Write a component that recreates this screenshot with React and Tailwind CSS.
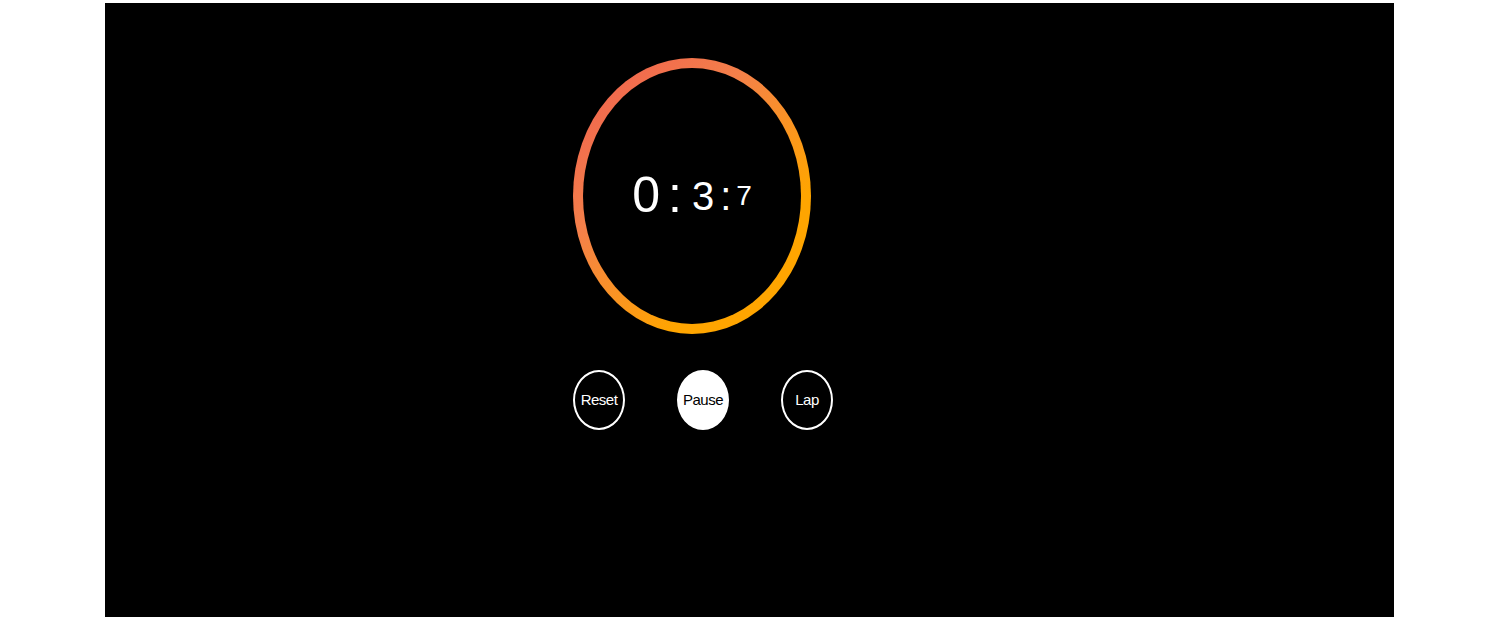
export default function App() {
  const font = { fontFamily: '"Liberation Sans", Arial, sans-serif' };

  return (
    <div className="min-h-[617px] bg-white pt-[3px]" style={font}>
      <div className="ml-[105px] w-[1289px] h-[614px] bg-black">
        <div className="flex flex-col pl-[468px] pt-[55px] w-fit">
          {/* Ring */}
          <div className="w-[238px] h-[276px] rounded-[50%] p-[10px] bg-[linear-gradient(135deg,#ef5c50_0%,#f4804a_35%,#ffa500_72%)]">
            <div className="w-full h-full rounded-[50%] bg-black flex items-center justify-center">
              <div className="flex items-center text-white leading-[1.15]">
                <span className="text-[50px]">0</span>
                <span className="text-[50px] ml-[8px]">:</span>
                <span className="text-[40px] ml-[10px] tracking-[-2px]">3</span>
                <span className="text-[40px] ml-[8px]">:</span>
                <span className="text-[28px] ml-[5px]">7</span>
              </div>
            </div>
          </div>

          {/* Buttons */}
          <div className="flex gap-[52px] mt-[36px]">
            <button className="w-[52px] h-[60px] rounded-[50%] border-2 border-white text-white text-[15px] tracking-[-0.5px] flex items-center justify-center">
              Reset
            </button>
            <button className="w-[52px] h-[60px] rounded-[50%] border-2 border-white bg-white text-black text-[15px] tracking-[-0.5px] flex items-center justify-center">
              Pause
            </button>
            <button className="w-[52px] h-[60px] rounded-[50%] border-2 border-white text-white text-[15px] tracking-[-0.5px] flex items-center justify-center">
              Lap
            </button>
          </div>
        </div>
      </div>
    </div>
  );
}
